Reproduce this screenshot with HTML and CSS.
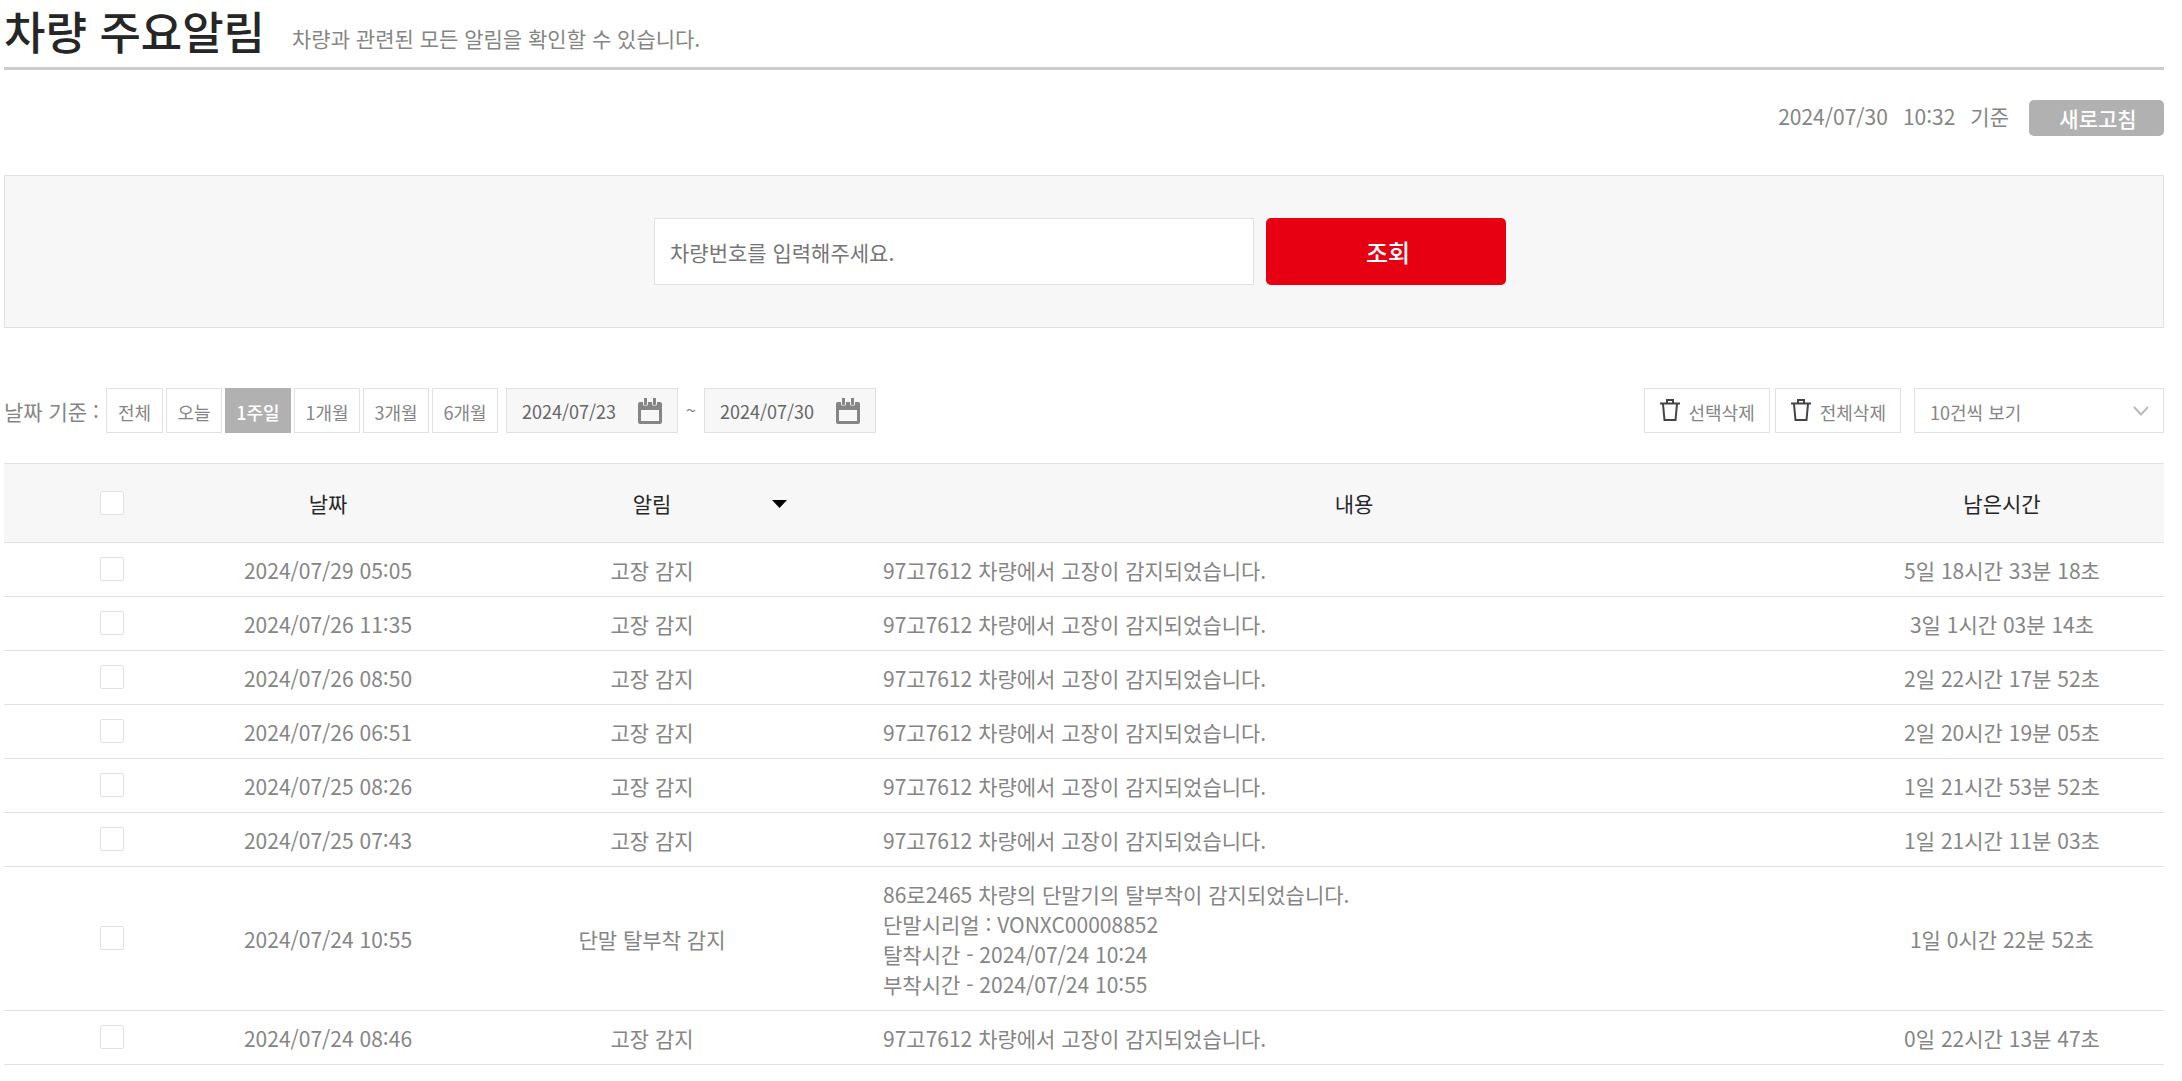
FILE: index.html
```html
<!DOCTYPE html>
<html lang="ko">
<head>
<meta charset="utf-8">
<meta name="viewport" content="width=device-width, initial-scale=1">
<title>차량 주요알림</title>
<link rel="stylesheet" href="styles.css">
</head>
<body>
<svg class="sprite" aria-hidden="true">
  <symbol id="icon-calendar" viewBox="0 0 24 26">
    <path fill="#858585" fill-rule="evenodd" d="M2 4H5V5.500A2.500 2.500 0 0 0 10 5.500V4H14V5.500A2.500 2.500 0 0 0 19 5.500V4H22A2 2 0 0 1 24 6V24A2 2 0 0 1 22 26H2A2 2 0 0 1 0 24V6A2 2 0 0 1 2 4ZM3 12V23H21V12Z"/>
    <path fill="#858585" d="M6 0H9V6A1.500 1.500 0 0 1 6 6ZM15 0H18V6A1.500 1.500 0 0 1 15 6Z"/>
  </symbol>
  <symbol id="icon-trash" viewBox="0 0 20 22">
    <path fill="none" stroke="#444" stroke-width="2" d="M0 4.500H20M7 4V1H13V4M3 5L4.500 21H15.500L17 5"/>
  </symbol>
</svg>
<main class="page">
  <header class="page-head">
    <h1 class="title">차량 주요알림</h1>
    <p class="subtitle">차량과 관련된 모든 알림을 확인할 수 있습니다.</p>
  </header>
  <div class="refresh">
    <span class="stamp">2024/07/30</span><span class="stamp">10:32</span><span class="stamp">기준</span>
    <button class="refresh-btn" type="button">새로고침</button>
  </div>
  <form class="search">
    <input class="search-input" type="text" aria-label="차량번호" placeholder="차량번호를 입력해주세요.">
    <button class="search-btn" type="button">조회</button>
  </form>
  <div class="toolbar">
    <span class="toolbar-label">날짜 기준 :</span>
    <div class="periods">
      <button class="btn" type="button">전체</button>
      <button class="btn" type="button">오늘</button>
      <button class="btn btn-active" type="button">1주일</button>
      <button class="btn" type="button">1개월</button>
      <button class="btn" type="button">3개월</button>
      <button class="btn" type="button">6개월</button>
    </div>
    <div class="dates">
      <label class="date"><input class="date-input" type="text" aria-label="시작일" value="2024/07/23"><svg class="calendar"><use href="#icon-calendar"/></svg></label>
      <span class="tilde">~</span>
      <label class="date"><input class="date-input" type="text" aria-label="종료일" value="2024/07/30"><svg class="calendar"><use href="#icon-calendar"/></svg></label>
    </div>
    <div class="actions">
      <button class="btn btn-delete" type="button"><svg class="trash"><use href="#icon-trash"/></svg>선택삭제</button>
      <button class="btn btn-delete" type="button"><svg class="trash"><use href="#icon-trash"/></svg>전체삭제</button>
    </div>
    <div class="page-size">
      <select class="select" aria-label="보기 개수"><option>10건씩 보기</option></select>
      <svg class="chevron" viewBox="0 0 16 10"><path fill="none" stroke="#bbb" stroke-width="2" d="M1 1L8 8.500L15 1"/></svg>
    </div>
  </div>
  <table class="alerts">
    <colgroup><col class="c-check"><col class="c-date"><col class="c-type"><col class="c-text"><col class="c-left"></colgroup>
    <thead>
      <tr><th><input class="check" type="checkbox" aria-label="전체 선택"></th><th>날짜</th><th class="sortable">알림<svg class="sort" viewBox="0 0 15 8"><path d="M0 0H15L7.500 8Z"/></svg></th><th>내용</th><th>남은시간</th></tr>
    </thead>
    <tbody>
      <tr><td class="pick"><input class="check" type="checkbox" aria-label="선택"></td><td>2024/07/29 05:05</td><td>고장 감지</td><td class="message">97고7612 차량에서 고장이 감지되었습니다.</td><td>5일 18시간 33분 18초</td></tr>
      <tr><td class="pick"><input class="check" type="checkbox" aria-label="선택"></td><td>2024/07/26 11:35</td><td>고장 감지</td><td class="message">97고7612 차량에서 고장이 감지되었습니다.</td><td>3일 1시간 03분 14초</td></tr>
      <tr><td class="pick"><input class="check" type="checkbox" aria-label="선택"></td><td>2024/07/26 08:50</td><td>고장 감지</td><td class="message">97고7612 차량에서 고장이 감지되었습니다.</td><td>2일 22시간 17분 52초</td></tr>
      <tr><td class="pick"><input class="check" type="checkbox" aria-label="선택"></td><td>2024/07/26 06:51</td><td>고장 감지</td><td class="message">97고7612 차량에서 고장이 감지되었습니다.</td><td>2일 20시간 19분 05초</td></tr>
      <tr><td class="pick"><input class="check" type="checkbox" aria-label="선택"></td><td>2024/07/25 08:26</td><td>고장 감지</td><td class="message">97고7612 차량에서 고장이 감지되었습니다.</td><td>1일 21시간 53분 52초</td></tr>
      <tr><td class="pick"><input class="check" type="checkbox" aria-label="선택"></td><td>2024/07/25 07:43</td><td>고장 감지</td><td class="message">97고7612 차량에서 고장이 감지되었습니다.</td><td>1일 21시간 11분 03초</td></tr>
      <tr><td class="pick"><input class="check" type="checkbox" aria-label="선택"></td><td>2024/07/24 10:55</td><td>단말 탈부착 감지</td><td class="message">86로2465 차량의 단말기의 탈부착이 감지되었습니다.<br>단말시리얼 : VONXC00008852<br>탈착시간 - 2024/07/24 10:24<br>부착시간 - 2024/07/24 10:55</td><td>1일 0시간 22분 52초</td></tr>
      <tr><td class="pick"><input class="check" type="checkbox" aria-label="선택"></td><td>2024/07/24 08:46</td><td>고장 감지</td><td class="message">97고7612 차량에서 고장이 감지되었습니다.</td><td>0일 22시간 13분 47초</td></tr>
    </tbody>
  </table>
</main>
</body>
</html>
```
FILE: styles.css
```css
* { box-sizing: border-box; }
body {
  margin: 0;
  background: #fff;
  color: #858585;
  font: 21px/30px "Noto Sans CJK KR", sans-serif;
}
button, input, select { font: inherit; color: inherit; margin: 0; }
button { cursor: pointer; }
.sprite { position: absolute; width: 0; height: 0; }
.page { padding: 0 18px 12px 4px; }

.page-head {
  display: flex;
  align-items: flex-start;
  gap: 27px;
  height: 70px;
  border-bottom: 3px solid #ccc;
}
.title { margin: 0; color: #262626; font-size: 45px; line-height: 62px; font-weight: 500; }
.subtitle { margin: 0; padding-top: 23px; }

.refresh { display: flex; justify-content: flex-end; gap: 15px; padding: 30px 0 39px; }
.stamp { line-height: 32px; }
.refresh-btn {
  width: 135px;
  height: 36px;
  margin-left: 5px;
  padding: 0 0 0 3px;
  border: 0;
  border-radius: 5px;
  background: #b1b1b1;
  color: #fff;
  font-weight: 500;
}

.search {
  display: flex;
  justify-content: center;
  gap: 12px;
  padding: 42px 8px 42px 0;
  border: 1px solid #e1e1e1;
  background: #f7f7f7;
}
.search-input { width: 600px; height: 67px; padding: 0 15px; border: 1px solid #e1e1e1; background: #fff; }
.search-input::placeholder { color: #757575; opacity: 1; }
.search-btn { width: 240px; height: 67px; padding: 0 0 0 4px; border: 0; border-radius: 5px; background: #e60012; color: #fff; font-size: 24px; font-weight: 500; }

.toolbar { display: flex; align-items: center; padding: 60px 0 30px; white-space: nowrap; }
.toolbar-label { width: 102px; }
.periods { display: grid; grid-template-columns: 57px 56px repeat(4, 66px); gap: 3px; }
.btn { height: 45px; padding: 2px 0 0; border: 1px solid #e1e1e1; background: #fff; font-size: 18px; }
.btn-active { border-color: #b1b1b1; background: #b1b1b1; color: #fff; font-weight: 500; }
.dates { display: flex; align-items: center; margin-left: 8px; }
.date {
  display: flex;
  align-items: center;
  justify-content: space-between;
  width: 172px;
  height: 45px;
  padding: 0 15px;
  border: 1px solid #e1e1e1;
  background: #f7f7f7;
}
.date-input { width: 104px; padding: 0; border: 0; background: transparent; color: #666; font-size: 18px; }
.calendar { width: 24px; height: 26px; }
.tilde { width: 26px; padding-bottom: 4px; text-align: center; font-size: 18px; }
.actions { display: flex; gap: 5px; margin-left: auto; }
.btn-delete { display: flex; align-items: center; gap: 9px; padding: 2px 14px 0 15px; }
.trash { width: 20px; height: 22px; margin-bottom: 3px; }
.page-size { position: relative; margin-left: 13px; }
.select { appearance: none; display: block; width: 250px; height: 45px; padding: 2px 15px 0; border: 1px solid #e1e1e1; border-radius: 0; background: #fff; font-size: 18px; }
.chevron { position: absolute; right: 15px; top: 18px; width: 16px; height: 10px; pointer-events: none; }

.alerts { width: 100%; table-layout: fixed; border-collapse: collapse; text-align: center; }
.c-check, .c-date { width: 10%; }
.c-type { width: 20%; }
.c-text { width: 45%; }
.c-left { width: 15%; }
.alerts th { position: relative; height: 79px; padding: 0; border: solid #e1e1e1; border-width: 1px 0; background: #f7f7f7; color: #262626; font-weight: 400; }
.alerts td { padding: 12px 0 11px; border-bottom: 1px solid #e1e1e1; }
.alerts .pick { padding: 10px 0 12px; }
.alerts .message { padding-left: 15px; text-align: left; }
.check { appearance: none; display: block; width: 24px; height: 24px; margin: 0 auto; border: 1px solid #e1e1e1; border-radius: 2px; background: #fff; }
.sort { position: absolute; left: 70%; top: 50%; width: 15px; height: 8px; margin: -3px 0 0 34px; }
```
